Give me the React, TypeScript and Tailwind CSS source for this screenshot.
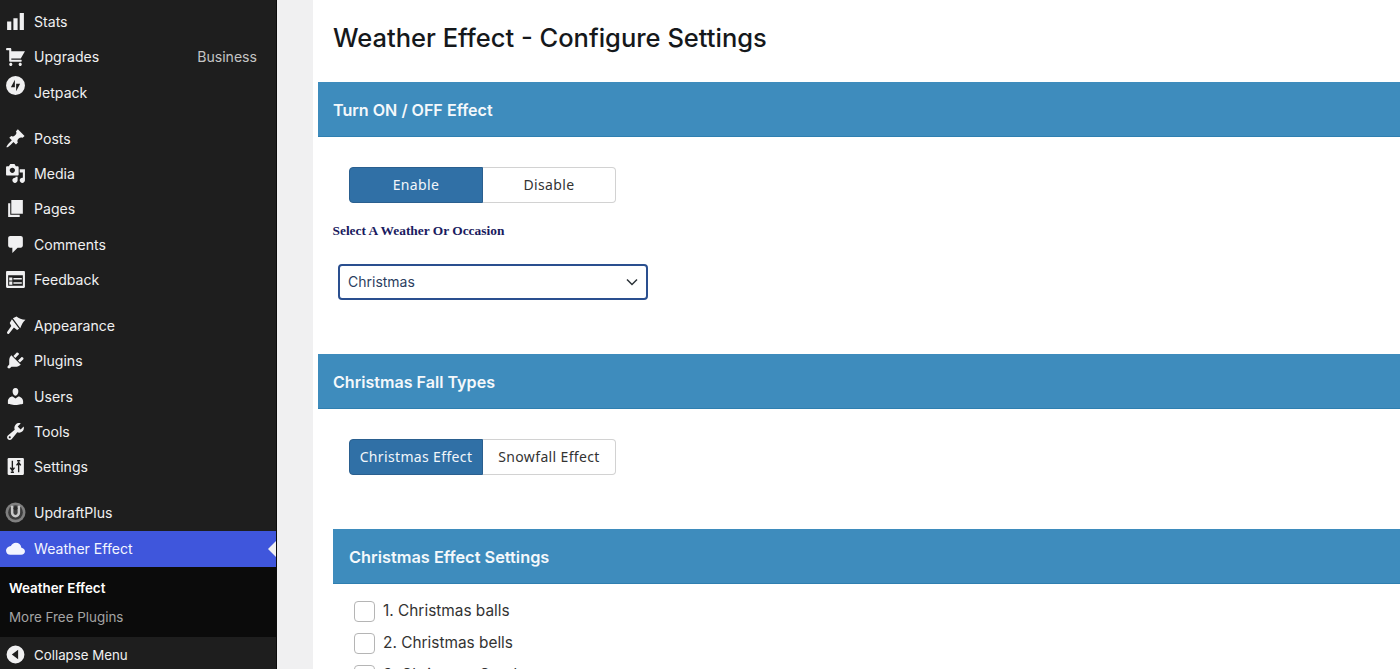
import type { ReactNode } from "react"

const font = { fontFamily: "Inter, 'Liberation Sans', sans-serif" }

// dashicons style glyphs, 20x20 box
const icons: Record<string, ReactNode> = {
  stats: <path d="M18 18V2h-4v16h4zm-6 0V7H8v11h4zm-6 0v-8H2v8h4z" />,
  cart: (
    <path d="M6 13h9c.55 0 1 .45 1 1s-.45 1-1 1H5c-.55 0-1-.45-1-1V4H2c-.55 0-1-.45-1-1s.45-1 1-1h3c.55 0 1 .45 1 1v2h13l-4 7H6v1zm-.5 3c.83 0 1.5.67 1.5 1.5S6.33 19 5.5 19 4 18.33 4 17.5 4.67 16 5.5 16zm9 0c.83 0 1.5.67 1.5 1.5s-.67 1.5-1.5 1.5-1.5-.67-1.5-1.5.67-1.5 1.5-1.5z" />
  ),
  jetpack: (
    <path
      fillRule="evenodd"
      d="M10 1a9 9 0 1 1 0 18 9 9 0 0 1 0-18zM9.400 4.500 5.600 11.600h3.800V4.500zM10.600 8.400v7.100l3.800-7.100h-3.800z"
    />
  ),
  pin: (
    <path d="M10.44 3.02l1.82-1.82 6.36 6.35-1.83 1.82c-1.05-.68-2.48-.57-3.41.36l-.75.75c-.92.93-1.04 2.35-.35 3.41l-1.83 1.82-2.41-2.41-2.8 2.79c-.42.42-3.38 2.71-3.8 2.29s1.86-3.39 2.28-3.81l2.79-2.79L4.1 9.36l1.83-1.82c1.05.69 2.48.57 3.4-.36l.75-.75c.93-.92 1.05-2.35.36-3.41z" />
  ),
  media: (
    <path d="M13 11V4c0-.55-.45-1-1-1h-1.67L9 1H5L3.67 3H2c-.55 0-1 .45-1 1v7c0 .55.45 1 1 1h10c.55 0 1-.45 1-1zM7 4.500c1.380 0 2.500 1.120 2.500 2.500S8.380 9.500 7 9.500 4.500 8.380 4.500 7 5.620 4.500 7 4.500zM14 6h5v10.500c0 1.380-1.120 2.500-2.500 2.500S14 17.880 14 16.500s1.120-2.500 2.500-2.500c.17 0 .34.02.5.05V9h-3V6zm-4 8.050V13h2v3.500c0 1.380-1.120 2.500-2.500 2.500S7 17.880 7 16.500 8.120 14 9.500 14c.17 0 .34.02.5.05z" />
  ),
  pages: <path d="M6 15V2h11v13H6zm-1 1h9v2H3V5h2v11z" />,
  comments: (
    <path d="M5 2h10c1.100 0 2 .9 2 2v7c0 1.100-.9 2-2 2h-3l-5 5v-5H5c-1.100 0-2-.9-2-2V4c0-1.100.9-2 2-2z" />
  ),
  feedback: (
    <path
      fillRule="evenodd"
      d="M2 2h16c.55 0 1 .45 1 1v14c0 .55-.45 1-1 1H2c-.55 0-1-.45-1-1V3c0-.55.45-1 1-1zm1 4v10h14V6H3zm1 2h3v3H4V8zm4 .5h8v1.500H8V8.500zM4 12h3v3H4v-3zm4 .5h8v1.500H8v-1.500z"
    />
  ),
  brush: (
    <>
      <path d="M7.500 3 11 1.500c2 1.700 5 3 8.500 3-2 1.700-3.500 4.200-5 8z" />
      <path d="M6.600 4 13.500 13l-2 1.200-3-2.200-4.500 5.500c-1 1.300-2.800 0-1.800-1.500L6 10.500 4.500 7.500z" />
    </>
  ),
  plugin: (
    <path d="M13.110 4.360L9.870 7.600 8 5.730l3.240-3.240c.35-.34 1.050-.2 1.560.32.52.51.66 1.210.31 1.550zm-8 1.770l.91-1.120 9.010 9.010-1.190.84c-.71.71-2.630 1.160-3.820 1.160H6.140L4.900 17.260c-.59.59-1.540.59-2.120 0-.59-.58-.59-1.530 0-2.120l1.240-1.240v-3.880c0-1.130.4-3.190 1.090-3.890zm7.260 3.970l3.240-3.240c.34-.35 1.040-.21 1.550.31.52.51.66 1.210.31 1.550l-3.240 3.250z" />
  ),
  users: (
    <path d="M10 9.250c-2.270 0-2.730-3.440-2.730-3.440C7 4.020 7.820 2 9.970 2c2.160 0 2.980 2.020 2.710 3.810 0 0-.41 3.440-2.680 3.440zm0 2.570L12.720 10c2.390 0 4.520 2.330 4.520 4.530v2.490s-3.650 1.130-7.240 1.130c-3.650 0-7.240-1.130-7.240-1.130v-2.490c0-2.250 1.940-4.480 4.470-4.480z" />
  ),
  tools: (
    <path d="M16.680 9.770c-1.340 1.340-3.300 1.670-4.950.99l-5.410 6.520c-.99.99-2.590.99-3.580 0s-.99-2.590 0-3.570l6.520-5.420c-.68-1.650-.35-3.610.99-4.950 1.280-1.280 3.120-1.620 4.720-1.060l-2.890 2.890 2.820 2.820 2.860-2.870c.53 1.580.18 3.390-1.080 4.690zM3.810 16.210c.4.39 1.040.39 1.430 0 .4-.4.4-1.040 0-1.430-.39-.4-1.030-.4-1.430 0-.39.39-.39 1.030 0 1.430z" />
  ),
  settings: (
    <>
      <rect x="2.500" y="2" width="15.500" height="16" rx="1" />
      <path
        d="M7 4.500v9M5 11l2 2.800L9 11M5.500 15.500h3M13 15.500v-9M11 9l2-2.800L15 9M11.500 4.500h3"
        fill="none"
        stroke="#1e1e1e"
        strokeWidth="1.300"
      />
    </>
  ),
  updraft: (
    <>
      <circle cx="10" cy="10" r="9.500" fill="#808080" />
      <circle cx="10" cy="10" r="7" fill="#3c3c3c" />
      <path
        d="M6.800 3.500v6.800a3.200 3.200 0 0 0 6.400 0V3.500"
        fill="none"
        stroke="#c9c9c9"
        strokeWidth="2.400"
      />
      <circle cx="10" cy="6" r="1.800" fill="#2a2a2a" />
    </>
  ),
  cloud: (
    <path d="M15.600 9.200C15.200 6.200 13 4.500 10.400 4.500c-2.200 0-4 1.200-4.800 3.100C3.200 7.800 1 9.600 1 12.100 1 14.300 2.800 16 5 16h10.400c2 0 3.600-1.500 3.600-3.400 0-1.800-1.500-3.200-3.400-3.400z" />
  ),
  collapse: (
    <path
      fillRule="evenodd"
      d="M10 1.500a8.500 8.500 0 1 1 0 17 8.500 8.500 0 0 1 0-17zM12.500 5.500 6.500 10l6 4.500v-9z"
    />
  ),
}

type NavItem = { label: string; icon: string; badge?: string }

const navGroups: NavItem[][] = [
  [
    { label: "Stats", icon: "stats" },
    { label: "Upgrades", icon: "cart", badge: "Business" },
    { label: "Jetpack", icon: "jetpack" },
  ],
  [
    { label: "Posts", icon: "pin" },
    { label: "Media", icon: "media" },
    { label: "Pages", icon: "pages" },
    { label: "Comments", icon: "comments" },
    { label: "Feedback", icon: "feedback" },
  ],
  [
    { label: "Appearance", icon: "brush" },
    { label: "Plugins", icon: "plugin" },
    { label: "Users", icon: "users" },
    { label: "Tools", icon: "tools" },
    { label: "Settings", icon: "settings" },
  ],
]

function NavIcon({ name }: { name: string }) {
  return (
    <svg viewBox="0 0 20 20" className="h-[21px] w-[21px] shrink-0" fill="currentColor">
      {icons[name]}
    </svg>
  )
}

function NavRow({ item }: { item: NavItem }) {
  return (
    <div className="flex h-[35.25px] items-center pl-[5px] pr-[19px] text-[14.1px] text-[#f0f0f1]">
      <span className={item.icon === "jetpack" ? "-translate-y-[7px]" : ""}>
        <NavIcon name={item.icon} />
      </span>
      <span className="ml-[8px]">{item.label}</span>
      {item.badge && <span className="ml-auto text-[#c4c4c4]">{item.badge}</span>}
    </div>
  )
}

function Sidebar() {
  return (
    <aside className="flex h-[669px] w-[277px] shrink-0 flex-col border-r border-[#0c0c0c] bg-[#1e1e1e] pt-[4px]">
      <div className="flex flex-col gap-[11px]">
        {navGroups.map((group) => (
          <div key={group[0].label}>
            {group.map((item) => (
              <NavRow key={item.label} item={item} />
            ))}
          </div>
        ))}
        <div>
          <NavRow item={{ label: "UpdraftPlus", icon: "updraft" }} />
          <div className="relative flex h-[36px] items-center bg-[#3f56dc] pl-[5px] text-[14.1px] text-[#f3f5ff]">
            <NavIcon name="cloud" />
            <span className="ml-[8px]">Weather Effect</span>
            <span className="absolute right-0 top-1/2 h-0 w-0 -translate-y-1/2 border-y-[8px] border-r-[8px] border-y-transparent border-r-[#f0f0f1]" />
          </div>
          <div className="h-[70px] bg-[#0b0b0b] pl-[9px] pt-[12px] text-[13.4px]">
            <div className="font-semibold leading-[18px] text-white">Weather Effect</div>
            <div className="mt-[11px] leading-[18px] text-[#a4a4a4]">More Free Plugins</div>
          </div>
          <div className="flex h-[35px] items-center pl-[5px] text-[13.3px] text-[#f0f0f1]">
            <NavIcon name="collapse" />
            <span className="ml-[8px] pt-[3px]">Collapse Menu</span>
          </div>
        </div>
      </div>
    </aside>
  )
}

function SectionBar({ title, className }: { title: string; className: string }) {
  return (
    <div
      className={`flex h-[55px] items-center border-b border-[#2f7fb0] bg-[#3e8cbd] pt-[2px] font-semibold text-[#f4f8fb] ${className}`}
    >
      {title}
    </div>
  )
}

function Toggle({ left, right }: { left: string; right: string }) {
  return (
    <div
      className="flex h-9 w-[267px] pb-0 text-[14px] tracking-[0.35px]"
      style={{ fontFamily: "'Noto Sans', sans-serif" }}
    >
      <div className="flex w-[134px] items-center justify-center rounded-l border border-[#2a5f8f] bg-[#3070a6] pb-[2px] text-[#f2f6fa]">
        {left}
      </div>
      <div className="flex w-[133px] items-center justify-center rounded-r border border-l-0 border-[#d2d2d2] bg-white pb-[2px] text-[#333]">
        {right}
      </div>
    </div>
  )
}

function CheckRow({ label }: { label: string }) {
  return (
    <div className="flex h-[32px] items-center">
      <span className="h-[21px] w-[21px] rounded-[4px] border border-[#b5b5b5] bg-white" />
      <span className="ml-2 text-[15.4px] text-[#333]">{label}</span>
    </div>
  )
}

export default function App() {
  return (
    <div className="flex h-[669px] w-[1400px] overflow-hidden bg-[#f0f0f1]" style={font}>
      <Sidebar />
      <div className="ml-[36px] h-[669px] flex-1 bg-white">
        <h1 className="ml-5 flex h-[82px] items-center pb-[5px] text-[25.5px] font-medium text-[#15181b]">
          Weather Effect - Configure Settings
        </h1>
        <div className="ml-[5px]">
          <SectionBar title="Turn ON / OFF Effect" className="px-[15px] text-[16.1px]" />
          <div className="ml-[31px] pt-[30px]">
            <Toggle left="Enable" right="Disable" />
          </div>
          <label
            className="ml-[14.5px] mt-[20px] block text-[13.4px] font-bold leading-[15px] text-[#1a1a5e]"
            style={{ fontFamily: "'Liberation Serif', serif" }}
          >
            Select A Weather Or Occasion
          </label>
          <div className="ml-[20px] mt-[26px] flex h-9 w-[310px] items-center justify-between rounded border-2 border-[#2a4f8f] bg-white pb-[1px] pl-[8px] pr-[6px] text-[14px] text-[#2c3e5f]">
            Christmas
            <svg viewBox="0 0 16 16" className="h-4 w-4" fill="none" stroke="#2c3338" strokeWidth="1.5">
              <path d="M3 5.5 8 10.5 13 5.5" />
            </svg>
          </div>
          <SectionBar title="Christmas Fall Types" className="mt-[54px] px-[15px] text-[16.1px]" />
          <div className="ml-[31px] pt-[30px]">
            <Toggle left="Christmas Effect" right="Snowfall Effect" />
          </div>
          <SectionBar
            title="Christmas Effect Settings"
            className="ml-[15px] mt-[54px] pl-[16px] text-[16.35px]"
          />
          <div className="ml-[36px] mt-[11px]">
            <CheckRow label="1. Christmas balls" />
            <CheckRow label="2. Christmas bells" />
            <CheckRow label="3. Christmas Candy" />
          </div>
        </div>
      </div>
    </div>
  )
}
